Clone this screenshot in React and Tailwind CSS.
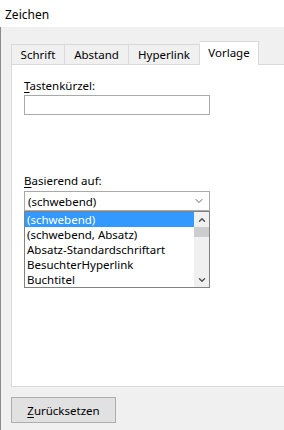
import { ChevronDown, ChevronUp } from "lucide-react";

const font = { fontFamily: '"Segoe UI", "Noto Sans", sans-serif' };

const tabs = [
  { label: "Schrift", w: "w-[54px]" },
  { label: "Abstand", w: "w-[64px]" },
  { label: "Hyperlink", w: "w-[71px]" },
];

const styles = [
  "(schwebend)",
  "(schwebend, Absatz)",
  "Absatz-Standardschriftart",
  "BesuchterHyperlink",
  "Buchtitel",
];

export default function App() {
  return (
    <div
      className="w-[284px] h-[430px] bg-[#f0f0f0] flex flex-col overflow-hidden text-[11.5px] leading-[15px] text-black"
      style={font}
    >
      <div className="h-[27px] shrink-0 bg-white pl-[5px] pt-[1px] flex items-center text-[12px]">
        Zeichen
      </div>

      <div className="flex-1 border-l border-[#8a8a8a] pl-[10px] pt-[13px]">
        <div className="flex items-end h-[24px]">
          {tabs.map((t) => (
            <div
              key={t.label}
              className={`${t.w} h-[20px] border-t border-r border-[#d9d9d9] first:border-l bg-[#f0f0f0] flex items-center justify-center`}
            >
              {t.label}
            </div>
          ))}
          <div className="w-[59px] h-[24px] -mb-px relative z-10 border-t border-r border-[#d9d9d9] bg-white flex items-center justify-center pb-[3px]">
            Vorlage
          </div>
        </div>

        <div className="w-[300px] h-[323px] border border-[#d9d9d9] bg-white pl-[12px] pt-[13px]">
          <div className="h-[15px] mb-[2px]">
            <span className="underline underline-offset-2">T</span>astenkürzel:
          </div>
          <div className="w-[186px] h-[20px] border border-[#a9a9a9] bg-white" />

          <div className="h-[15px] mt-[58px] mb-[3px]">
            <span className="underline underline-offset-2">B</span>asierend auf:
          </div>
          <div className="w-[186px] h-[20px] border border-[#a9a9a9] bg-white flex items-center pl-[3px] pr-[4px]">
            <span className="flex-1">(schwebend)</span>
            <ChevronDown size={12} strokeWidth={1.5} className="text-[#333]" />
          </div>
          <div className="w-[186px] h-[77px] border border-[#828282] bg-white flex">
            <div className="flex-1 flex flex-col overflow-hidden">
              {styles.map((s, i) => (
                <div
                  key={s}
                  className={`h-[15px] pl-[2px] whitespace-nowrap ${
                    i === 0 ? "bg-[#3399ff] text-white" : ""
                  }`}
                >
                  {s}
                </div>
              ))}
            </div>
            <div className="w-[15px] bg-[#f0f0f0] flex flex-col items-center">
              <div className="h-[15px] flex items-center justify-center">
                <ChevronUp size={10} strokeWidth={3.5} className="text-[#555]" />
              </div>
              <div className="w-full h-[10px] bg-[#cdcdcd]" />
              <div className="flex-1" />
              <div className="h-[15px] flex items-center justify-center">
                <ChevronDown size={10} strokeWidth={3.5} className="text-[#555]" />
              </div>
            </div>
          </div>
        </div>

        <button className="mt-[10px] w-[105px] h-[26px] border border-[#adadad] bg-[#e1e1e1] flex items-center justify-center text-[11.5px]">
          <span>
            <span className="underline underline-offset-2">Z</span>urücksetzen
          </span>
        </button>
      </div>
    </div>
  );
}
